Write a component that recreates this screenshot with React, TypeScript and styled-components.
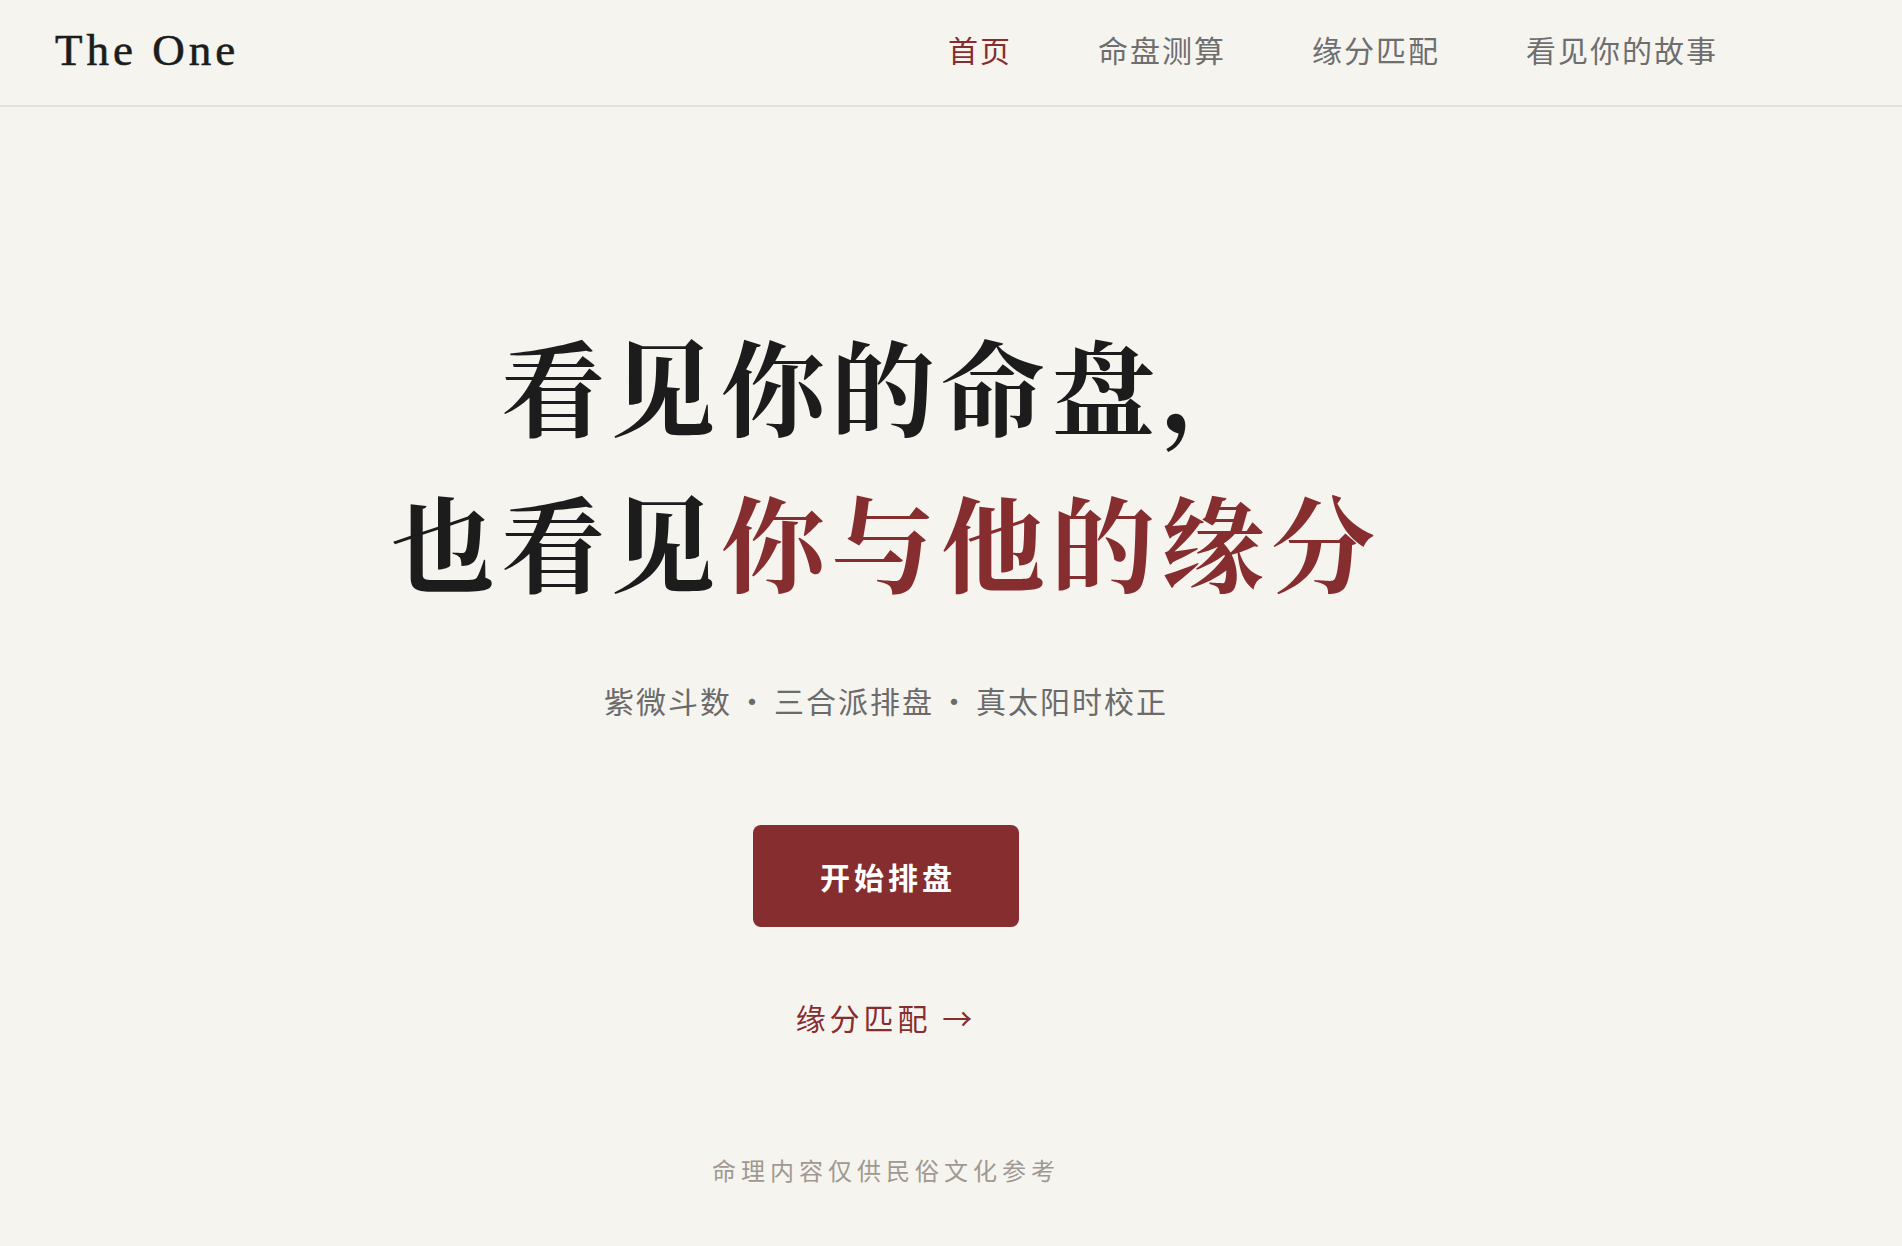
import styled, { createGlobalStyle } from "styled-components";

const RED = "#862d30";

const GlobalStyle = createGlobalStyle`
    html, body {
        margin: 0;
        padding: 0;
        background: #f6f4ef;
    }
    body {
        font-family: "Noto Sans CJK SC", "Noto Sans", sans-serif;
        color: #1c1c1c;
    }
    * {
        box-sizing: border-box;
    }
`

const Header = styled.header`
    height: 107px;
    display: flex;
    align-items: center;
    justify-content: space-between;
    padding: 0 184px 6px 55px;
    border-bottom: 2px solid #e5e0d8;
`

const Logo = styled.div`
    font-family: "Liberation Serif", "Noto Serif CJK SC", serif;
    font-size: 45px;
    font-weight: 500;
    letter-spacing: 4px;
    color: #1c1c1c;
    line-height: 1.2;
    -webkit-text-stroke: 0.6px #1c1c1c;
`

const Nav = styled.nav`
    display: flex;
    gap: 86px;
`

const NavLink = styled.a<{ $active?: boolean }>`
    font-size: 30px;
    letter-spacing: 2px;
    line-height: 1.5;
    text-decoration: none;
    color: ${p => p.$active ? RED : "#6e6e6e"};
    cursor: pointer;
`

const Hero = styled.main`
    margin-right: 130px;
    display: flex;
    flex-direction: column;
    align-items: center;
    padding-top: 199px;
    text-align: center;
`

const Title = styled.h1`
    margin: 0;
    font-family: "Noto Serif CJK SC", "Noto Sans CJK SC", serif;
    font-size: 104px;
    font-weight: 700;
    letter-spacing: 6px;
    line-height: 156px;
    color: #1c1c1c;
`

const Accent = styled.span`
    color: ${RED};
`

const Subtitle = styled.p`
    margin: 61px 0 0;
    font-size: 30px;
    letter-spacing: 2px;
    line-height: 42px;
    color: #6b6b6b;
`

const Dot = styled.span`
    margin: 0 5px;
`

const StartButton = styled.button`
    margin-top: 104px;
    border: none;
    border-radius: 8px;
    background: ${RED};
    color: #fff;
    font-family: "Noto Sans CJK SC", sans-serif;
    font-size: 30px;
    font-weight: 700;
    letter-spacing: 4px;
    line-height: 46px;
    padding: 28px 63px 28px 67px;
    cursor: pointer;
`

const MatchLink = styled.a`
    margin-top: 68px;
    font-size: 30px;
    letter-spacing: 4px;
    line-height: 45px;
    color: ${RED};
    text-decoration: none;
    cursor: pointer;
`

const Note = styled.p`
    margin: 112px 0 0;
    font-size: 24px;
    letter-spacing: 5px;
    line-height: 36px;
    color: #9f9991;
`

const navItems = ["首页", "命盘测算", "缘分匹配", "看见你的故事"];

export default function App() {
    return <>
        <GlobalStyle/>
        <Header>
            <Logo>The One</Logo>
            <Nav>
                {navItems.map((item, i) => (
                    <NavLink key={item} $active={i === 0}>{item}</NavLink>
                ))}
            </Nav>
        </Header>
        <Hero>
            <Title>
                看见你的命盘，<br/>
                也看见<Accent>你与他的缘分</Accent>
            </Title>
            <Subtitle>
                紫微斗数<Dot>·</Dot>三合派排盘<Dot>·</Dot>真太阳时校正
            </Subtitle>
            <StartButton type={'button'}>开始排盘</StartButton>
            <MatchLink>缘分匹配 →</MatchLink>
            <Note>命理内容仅供民俗文化参考</Note>
        </Hero>
    </>
}
